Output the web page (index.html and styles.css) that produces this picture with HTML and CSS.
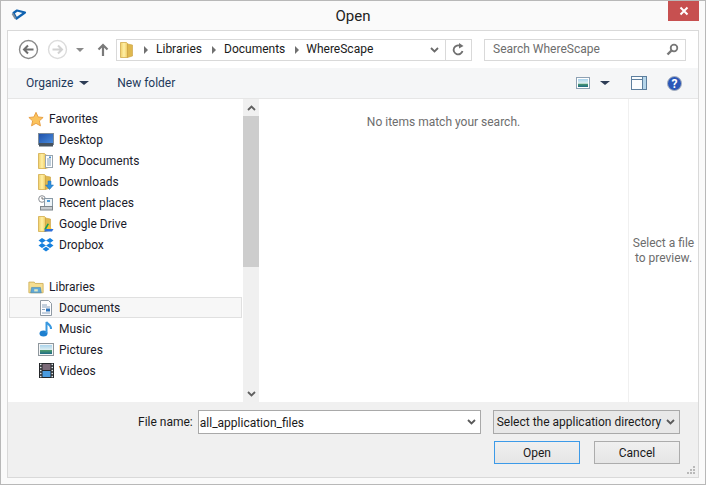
FILE: index.html
```html
<!DOCTYPE html>
<html lang="en">
<head>
<meta charset="UTF-8" />
<title>Open</title>
<link rel="stylesheet" href="styles.css">
</head>
<body>
  <svg class="defs" width="0" height="0" aria-hidden="true">
    <defs>
      <linearGradient id="folderFill" x1="0" y1="0" x2="1" y2="0">
        <stop offset="0" stop-color="#f0cf68"/><stop offset=".5" stop-color="#fff0a6"/><stop offset="1" stop-color="#eec95f"/>
      </linearGradient>
      <linearGradient id="screenFill" x1="0" y1="0" x2="1" y2="1">
        <stop offset="0" stop-color="#1d4fa8"/><stop offset="1" stop-color="#4c8fe0"/>
      </linearGradient>
      <linearGradient id="photoFill" x1="0" y1="0" x2="0" y2="1">
        <stop offset="0" stop-color="#a9d3ec"/><stop offset="0.55" stop-color="#dff0f2"/><stop offset="0.6" stop-color="#4d9a6e"/><stop offset="1" stop-color="#1d6a86"/>
      </linearGradient>
      <symbol id="folderTall" viewBox="0 0 14 16">
        <path d="M.5 .5h6l1 1v14h-7z" fill="url(#folderFill)" stroke="#d2ac4c" stroke-width=".8"/>
        <path d="M7.500 2l5 1v11l-5 1.500z" fill="#dfb84e" stroke="#c9a03f" stroke-width=".6"/>
      </symbol>
    </defs>
  </svg>

  <div class="window">
    <header class="titlebar">
      <svg class="app-icon" width="17" height="12" viewBox="0 0 17 12">
        <path d="M3.500 4L7 1.500 15 3.500 6.500 9.500z" fill="none" stroke="#0f62b0" stroke-width="2.200" stroke-linejoin="round"/>
        <path d="M2.500 4.500l3 5" stroke="#7b8a99" stroke-width="2"/>
      </svg>
      <h1 class="title">Open</h1>
      <button class="close-btn" aria-label="Close">
        <svg width="10" height="10" viewBox="0 0 10 10"><path d="M1.500 1.500l7 7M8.500 1.500l-7 7" stroke="#fff" stroke-width="2"/></svg>
      </button>
    </header>

    <div class="panel">
      <div class="navbar">
        <svg class="nav-btn" width="21" height="21" viewBox="0 0 21 21">
          <circle cx="10.500" cy="10.500" r="9" fill="#fff" stroke="#8a8a8a" stroke-width="1.400"/>
          <path d="M15.500 10.500H6.500M10 6.500l-4 4 4 4" fill="none" stroke="#6e6e6e" stroke-width="2"/>
        </svg>
        <svg class="nav-btn" width="21" height="21" viewBox="0 0 21 21">
          <circle cx="10.500" cy="10.500" r="9" fill="#fff" stroke="#dcdcdc" stroke-width="1.400"/>
          <path d="M5.500 10.500h9M11 6.500l4 4-4 4" fill="none" stroke="#d2d2d2" stroke-width="2"/>
        </svg>
        <span class="caret caret-grey"></span>
        <svg class="up-btn" width="12" height="14" viewBox="0 0 12 14"><path d="M6 13V2M1.500 6.500L6 2l4.500 4.500" fill="none" stroke="#7a7a7a" stroke-width="2.200"/></svg>

        <div class="address">
          <svg class="addr-folder" width="14" height="18" viewBox="0 0 14 16"><use href="#folderTall" width="14" height="16"/></svg>
          <span class="crumb-sep"></span>
          <span class="crumb">Libraries</span>
          <span class="crumb-sep"></span>
          <span class="crumb">Documents</span>
          <span class="crumb-sep"></span>
          <span class="crumb">WhereScape</span>
          <svg class="chevron addr-chevron" width="9" height="6" viewBox="0 0 9 6"><path d="M1 1l3.500 3.500L8 1" fill="none" stroke="#6a6a6a" stroke-width="1.800"/></svg>
          <span class="refresh">
            <svg width="13" height="14" viewBox="0 0 13 14"><path d="M10.500 8a4.500 4.500 0 1 1-2-5" fill="none" stroke="#6f6f6f" stroke-width="1.800"/><path d="M7 0l4.500 3L7 5.500z" fill="#6f6f6f"/></svg>
          </span>
        </div>

        <div class="search">
          <span class="search-text">Search WhereScape</span>
          <svg width="13" height="13" viewBox="0 0 13 13"><circle cx="8" cy="5" r="3.300" fill="none" stroke="#777" stroke-width="1.800"/><path d="M5.500 7.500L1.500 11.500" stroke="#777" stroke-width="2.400"/></svg>
        </div>
      </div>

      <div class="cmdbar">
        <span class="cmd">Organize</span>
        <span class="caret caret-dark"></span>
        <span class="cmd cmd-new">New folder</span>
        <div class="cmd-right">
          <svg width="14" height="12" viewBox="0 0 14 12"><rect x=".5" y=".5" width="13" height="11" fill="#fff" stroke="#8ea1b3"/><rect x="2" y="2" width="10" height="8" fill="url(#photoFill)"/></svg>
          <span class="caret caret-dark caret-view"></span>
          <svg class="pane-icon" width="16" height="14" viewBox="0 0 16 14"><rect x=".5" y=".5" width="15" height="13" fill="#fbfdfe" stroke="#5d7f9e"/><path d="M1 3.500h14" stroke="#5d7f9e"/><rect x="12" y="1" width="3" height="12" fill="#b6d6ea"/><path d="M11.500 1v12" stroke="#5d7f9e"/></svg>
          <svg class="help-icon" width="15" height="15" viewBox="0 0 15 15"><circle cx="7.500" cy="7.500" r="7" fill="#2b57b8" stroke="#a9b1bd"/><text x="7.500" y="11.500" class="help-mark">?</text></svg>
        </div>
      </div>

      <div class="content">
        <nav class="tree">
          <div class="tree-group">
            <div class="tree-row tree-head">
              <span class="tree-icon"><svg width="17" height="16" viewBox="0 0 18 17"><path d="M9 1l2.400 5.200 5.600.6-4.200 3.800 1.200 5.600L9 13.400 4 16.200l1.200-5.600L1 6.800l5.600-.6z" fill="#fbc35c" stroke="#e59a3c"/></svg></span>
              <span>Favorites</span>
            </div>
            <div class="tree-row">
              <span class="tree-icon"><svg width="16" height="14" viewBox="0 0 16 14"><rect x=".5" y=".5" width="15" height="11" fill="url(#screenFill)" stroke="#7d8b99"/><rect x="1" y="10" width="14" height="3.500" fill="#45525e"/></svg></span>
              <span>Desktop</span>
            </div>
            <div class="tree-row">
              <span class="tree-icon"><svg width="16" height="16" viewBox="0 0 16 16"><use href="#folderTall" width="14" height="16"/><rect x="7.500" y="2.500" width="7" height="12" fill="#fff" stroke="#98a4ad"/><path d="M9 6h4M9 8h4M9 10h4M9 12h4" stroke="#7f9db8"/><rect x="11" y="3.500" width="2" height="1.500" fill="#4c90d0"/></svg></span>
              <span>My Documents</span>
            </div>
            <div class="tree-row">
              <span class="tree-icon"><svg width="16" height="16" viewBox="0 0 16 16"><use href="#folderTall" width="14" height="16"/><path d="M10 7h3v4h2.500l-4 4.500-4-4.500H10z" fill="#2e8fdc" stroke="#1e6fb5" stroke-width=".5"/></svg></span>
              <span>Downloads</span>
            </div>
            <div class="tree-row">
              <span class="tree-icon"><svg width="16" height="16" viewBox="0 0 16 16"><circle cx="4" cy="4" r="3.300" fill="#fff" stroke="#8a8f94"/><path d="M4 2v2h2" fill="none" stroke="#555" stroke-width=".8"/><rect x="6.500" y="3.500" width="8" height="8" fill="#eef4f8" stroke="#8a9aa6"/><rect x="9" y="5" width="3" height="2" fill="#4c9ad6"/><rect x="2.500" y="11.500" width="12" height="3.500" fill="#c7ccd0" stroke="#7d858b"/></svg></span>
              <span>Recent places</span>
            </div>
            <div class="tree-row">
              <span class="tree-icon"><svg width="16" height="16" viewBox="0 0 16 16"><use href="#folderTall" width="14" height="16"/><path d="M10.500 8l3.500 5.500h-6z" fill="#f7c531"/><path d="M6 13.500l3.500-6 1.500 .5-3 5.500z" fill="#1b9e56"/><path d="M7.500 13h8l-1.500 2.500H6z" fill="#2f6fd8"/></svg></span>
              <span>Google Drive</span>
            </div>
            <div class="tree-row">
              <span class="tree-icon"><svg width="16" height="15" viewBox="0 0 16 15"><path d="M4 1L.5 3.500 4 6 .5 8.500 4 11l4-2.500L12 11l3.500-2.500L12 6l3.500-2.500L12 1 8 3.500zM4 6l4-2.500L12 6 8 8.500zM4.500 12L8 9.800l3.500 2.200L8 14.500z" fill="#1580de" fill-rule="evenodd"/></svg></span>
              <span>Dropbox</span>
            </div>
          </div>

          <div class="tree-group">
            <div class="tree-row tree-head">
              <span class="tree-icon"><svg width="16" height="14" viewBox="0 0 18 15"><path d="M1 2h6l1 1.500h9V14H1z" fill="#f6de91" stroke="#cfb05a"/><path d="M4 8h10l1 6H3z" fill="#5fa8d8" stroke="#3d83b3" stroke-width=".6"/><rect x="7" y="10" width="4" height="2.500" fill="#dfe7c0"/></svg></span>
              <span>Libraries</span>
            </div>
            <div class="tree-row tree-row-active">
              <span class="tree-icon"><svg width="14" height="16" viewBox="0 0 14 16"><path d="M1.500 .5h8l3 3v12h-11z" fill="#fdfdfe" stroke="#8f99a3"/><path d="M3 5h5M3 7h8M3 13h8" stroke="#8aa2bc"/><rect x="7" y="8.500" width="4" height="3" fill="#2d75bd"/><path d="M3 9.500h3" stroke="#8aa2bc"/></svg></span>
              <span>Documents</span>
            </div>
            <div class="tree-row">
              <span class="tree-icon"><svg width="14" height="16" viewBox="0 0 14 16"><ellipse cx="4.500" cy="12.500" rx="4" ry="3" fill="#1d7fcf"/><path d="M7.500 12V1c1 2 5 3 4.500 7" fill="none" stroke="#3898e0" stroke-width="2"/></svg></span>
              <span>Music</span>
            </div>
            <div class="tree-row">
              <span class="tree-icon"><svg width="16" height="13" viewBox="0 0 16 13"><rect x=".5" y=".5" width="15" height="12" fill="#f4f6f7" stroke="#8f979d"/><rect x="2" y="2" width="12" height="9" fill="url(#photoFill)"/></svg></span>
              <span>Pictures</span>
            </div>
            <div class="tree-row">
              <span class="tree-icon"><svg width="15" height="15" viewBox="0 0 15 15"><rect width="15" height="15" fill="#24272a"/><rect x="3.500" y="1" width="8" height="6" fill="#7a6a78"/><rect x="3.500" y="8" width="8" height="6" fill="#4a9ce0"/><path d="M1 1.500h1.500M1 4.500h1.500M1 7.500h1.500M1 10.500h1.500M1 13.500h1.500M12.500 1.500H14M12.500 4.500H14M12.500 7.500H14M12.500 10.500H14M12.500 13.500H14" stroke="#dfe6ea" stroke-width="1.400"/></svg></span>
              <span>Videos</span>
            </div>
          </div>
        </nav>

        <div class="scrollbar">
          <span class="scroll-btn"><svg width="9" height="6" viewBox="0 0 9 6"><path d="M1 5l3.500-3.500L8 5" fill="none" stroke="#606060" stroke-width="1.800"/></svg></span>
          <div class="scroll-track"><div class="scroll-thumb"></div></div>
          <span class="scroll-btn"><svg width="9" height="6" viewBox="0 0 9 6"><path d="M1 1l3.500 3.500L8 1" fill="none" stroke="#606060" stroke-width="1.800"/></svg></span>
        </div>

        <main class="filelist">No items match your search.</main>
        <aside class="preview"><span>Select a file<br>to preview.</span></aside>
      </div>

      <footer class="footer">
        <div class="footer-row">
          <label class="fname-label">File name:</label>
          <div class="combo">
            <span class="combo-text">all_application_files</span>
            <svg width="9" height="6" viewBox="0 0 9 6"><path d="M1 1l3.500 3.500L8 1" fill="none" stroke="#5a5a5a" stroke-width="1.800"/></svg>
          </div>
          <div class="filter">
            <span>Select the application directory</span>
            <svg width="9" height="6" viewBox="0 0 9 6"><path d="M1 1l3.500 3.500L8 1" fill="none" stroke="#5a5a5a" stroke-width="1.800"/></svg>
          </div>
        </div>
        <div class="footer-row footer-btns">
          <button class="btn btn-default">Open</button>
          <button class="btn">Cancel</button>
        </div>
        <svg class="grip" width="9" height="9" viewBox="0 0 9 9"><path d="M6 0h2v2H6zM3 3h2v2H3zM6 3h2v2H6zM0 6h2v2H0zM3 6h2v2H3zM6 6h2v2H6z" fill="#b9b9b9"/></svg>
      </footer>
    </div>
  </div>
</body>
</html>
```

FILE: styles.css
```css
/* Reset */
* {
  box-sizing: border-box;
}
html, body {
  margin: 0;
  height: 100%;
  overflow: hidden;
}
body {
  font-family: Roboto, "Noto Sans", sans-serif;
  font-size: 12px;
  color: #1a1a2a;
  white-space: nowrap;
}
.defs {
  display: block;
  height: 0;
}

/* Window frame */
.window {
  width: 706px;
  height: 485px;
  border: 1px solid #b8b8b8;
  background: #fafafa;
  padding: 0 6px 6px 6px;
  display: flex;
  flex-direction: column;
}
.titlebar {
  height: 29px;
  flex: none;
  display: grid;
  grid-template-columns: 1fr auto 1fr;
  align-items: start;
}
.app-icon {
  margin: 8px 0 0 3px;
}
.title {
  margin: 5px 0 0;
  font-size: 15px;
  line-height: 20px;
  font-weight: 400;
  color: #222;
}
.close-btn {
  justify-self: end;
  width: 31px;
  height: 20px;
  padding: 0;
  border: none;
  background: #c75050;
  display: flex;
  align-items: center;
  justify-content: center;
}

.panel {
  flex: 1;
  min-height: 0;
  border: 1px solid #d9d9d9;
  background: #fff;
  display: flex;
  flex-direction: column;
}

/* Address row */
.navbar {
  height: 37px;
  flex: none;
  display: flex;
  align-items: center;
  padding: 0 12px 0 10px;
}
.nav-btn {
  margin-right: 8px;
}
.nav-btn + .caret {
  margin: 0 13px 0 0;
}
.caret {
  display: inline-block;
  width: 0;
  height: 0;
  border-style: solid;
  border-width: 4px 4px 0;
  border-color: #8a8a8a transparent transparent;
}
.caret-dark {
  border-width: 4px 5px 0;
  border-top-color: #2d3c55;
}
.up-btn {
  margin-right: 7px;
}
.address {
  width: 356px;
  height: 22px;
  border: 1px solid #d9d9d9;
  display: flex;
  align-items: center;
  padding-left: 3px;
  color: #1a1a1a;
}
.addr-folder {
  margin-right: 10px;
}
.crumb-sep {
  width: 0;
  height: 0;
  border-style: solid;
  border-width: 4px 0 4px 4px;
  border-color: transparent transparent transparent #707070;
  margin-right: 8px;
}
.crumb {
  margin: 0 10px 2px 0;
}
.crumb + .crumb-sep + .crumb + .crumb-sep {
  margin-right: 7px;
}
.addr-chevron {
  margin-left: auto;
  margin-right: 6px;
}
.refresh {
  width: 26px;
  height: 100%;
  border-left: 1px solid #d9d9d9;
  display: flex;
  align-items: center;
  justify-content: center;
}
.search {
  width: 202px;
  height: 22px;
  margin-left: 12px;
  border: 1px solid #d9d9d9;
  display: flex;
  align-items: center;
  justify-content: space-between;
  padding: 0 6px 0 8px;
  color: #6d6d6d;
}
.search-text {
  margin-bottom: 2px;
}

/* Command bar */
.cmdbar {
  height: 31px;
  flex: none;
  background: #f5f6f7;
  border-bottom: 1px solid #e6e6e6;
  display: flex;
  align-items: center;
  padding-left: 18px;
}
.cmd {
  color: #1e395b;
}
.cmd + .caret {
  margin-left: 6px;
}
.cmd-new {
  margin-left: 28px;
}
.cmd-right {
  margin-left: auto;
  display: flex;
  align-items: center;
  padding-right: 16px;
}
.caret-view {
  margin-left: 10px;
}
.pane-icon {
  margin-left: 21px;
}
.help-icon {
  margin-left: 20px;
}
.help-mark {
  font-size: 12px;
  font-weight: 700;
  fill: #fff;
  text-anchor: middle;
}

/* Main area */
.content {
  flex: 1;
  min-height: 0;
  display: flex;
}
.tree {
  width: 235px;
  flex: none;
  padding: 9px 1px 0 1px;
  display: flex;
  flex-direction: column;
  gap: 21px;
}
.tree-row {
  height: 21px;
  display: flex;
  align-items: center;
  gap: 5px;
  padding-left: 28px;
  border: 1px solid transparent;
  color: #1a1a2a;
}
.tree-icon {
  width: 16px;
  flex: none;
  display: flex;
  justify-content: center;
}
.tree-head {
  padding-left: 18px;
}
.tree-row-active {
  background: #f7f7f7;
  border-color: #e0e0e0;
}
.scrollbar {
  width: 16px;
  flex: none;
  background: #f0f0f0;
  display: flex;
  flex-direction: column;
}
.scroll-btn {
  height: 17px;
  flex: none;
  display: flex;
  align-items: center;
  justify-content: center;
}
.scroll-track {
  flex: 1;
}
.scroll-thumb {
  height: 151px;
  background: #cdcdcd;
}
.filelist {
  flex: 1;
  text-align: center;
  padding-top: 16px;
  color: #6d6d6d;
}
.preview {
  width: 70px;
  flex: none;
  border-left: 1px solid #f0f0f0;
  color: #6d6d6d;
  display: flex;
  align-items: center;
  justify-content: center;
  text-align: center;
  line-height: 15px;
}

/* Footer */
.footer {
  height: 75px;
  flex: none;
  background: #f0f0f0;
  padding: 8px 18px 0 0;
  position: relative;
}
.footer-row {
  display: flex;
  align-items: center;
}
.fname-label {
  margin-left: 130px;
  margin-right: 5px;
  color: #1a1a1a;
}
.combo {
  width: 284px;
  height: 24px;
  background: #fff;
  border: 1px solid #a9a9a9;
  display: flex;
  align-items: center;
  justify-content: space-between;
  padding: 0 4px 0 1px;
  color: #1a1a1a;
}
.combo-text {
  margin-top: 2px;
}
.filter {
  width: 188px;
  height: 24px;
  margin-left: 12px;
  background: #e8e8e8;
  border: 1px solid #a9a9a9;
  display: flex;
  align-items: center;
  justify-content: space-between;
  padding: 0 4px 0 3px;
  color: #1a1a1a;
}
.footer-btns {
  margin-top: 7px;
  justify-content: flex-end;
  gap: 14px;
}
.btn {
  width: 86px;
  height: 23px;
  padding: 0;
  font: inherit;
  color: #1a1a1a;
  background: linear-gradient(#f0f0f0, #e5e5e5);
  border: 1px solid #acacac;
}
.btn-default {
  border-color: #3c9ae8;
}
.grip {
  position: absolute;
  right: 2px;
  bottom: 2px;
}
```
